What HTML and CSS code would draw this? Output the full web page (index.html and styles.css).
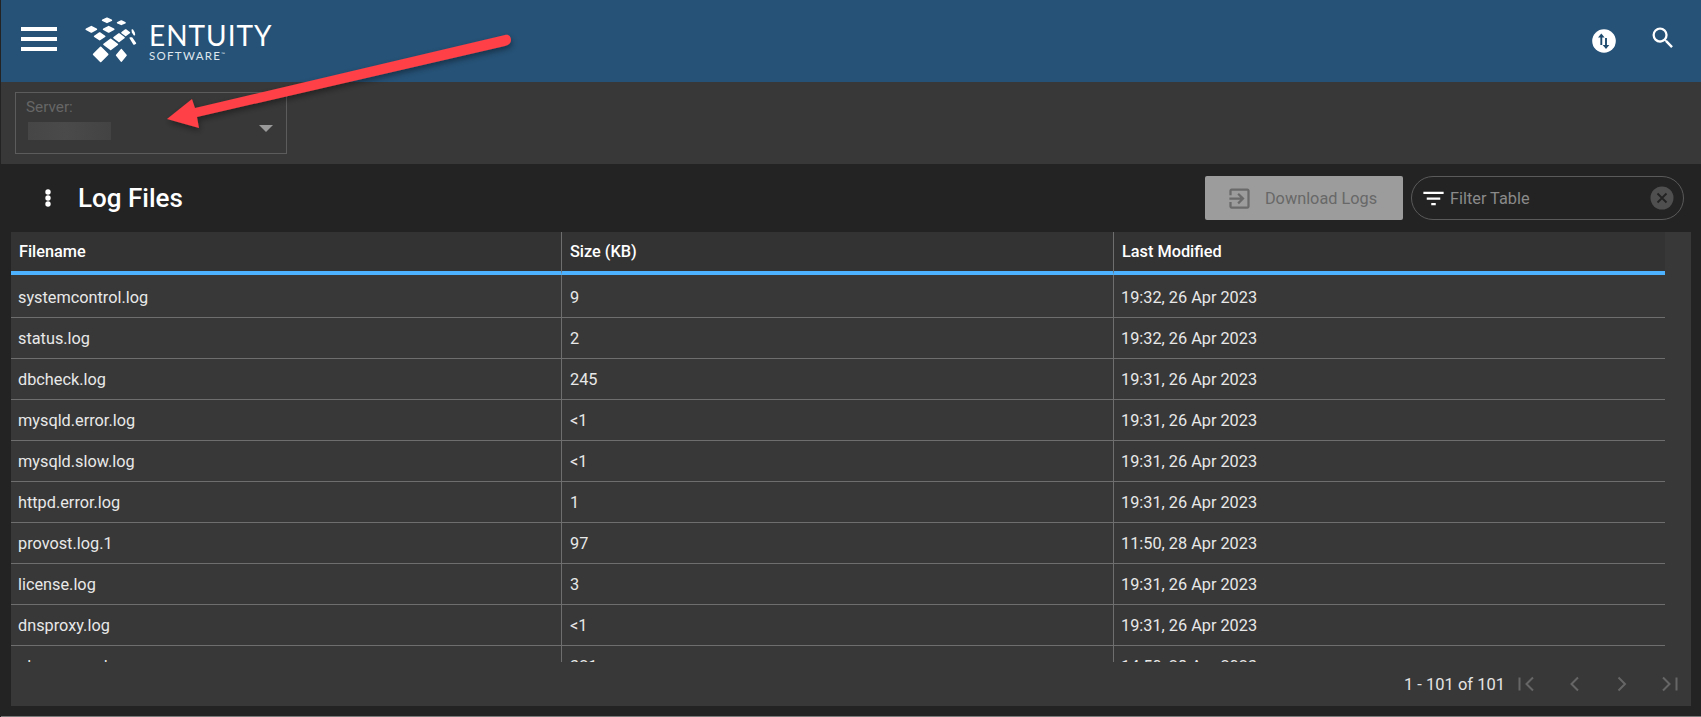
FILE: index.html
```html
<!DOCTYPE html>
<html lang="en">
<head>
<meta charset="utf-8">
<title>Log Files</title>
<link rel="stylesheet" href="styles.css">
</head>
<body>
<div class="app">
  <header class="topbar">
    <div class="brand">
      <button class="menu" aria-label="Menu"><span></span><span></span><span></span></button>
      <svg class="logo-mark" width="60" height="56" viewBox="0 0 180 168">
        <g fill="#fff" stroke="#fff" stroke-width="5" stroke-linejoin="round">
          <path d="M68 106l21 21-21 21-21-21z"/>
          <path d="M130 113l14 17-14 17-14-17z"/>
          <path d="M98 82l20 15-20 15-20-15z"/>
          <path d="M65 63l15 10-15 10-15-10z"/>
          <path d="M40 44l15 8-15 8-15-8z"/>
          <path d="M123 66l15 11-15 11-15-11z"/>
          <path d="M92 44l15 8-15 8-15-8z"/>
          <path d="M87 19l13 6-13 6-13-6z"/>
          <path d="M130 27l11 5-11 5-11-5z"/>
          <path d="M143 54l11 8-11 8-11-8z"/>
          <path d="M163 54l5 8 1 6-5-7z"/>
          <path d="M157 78l4 0 11 16-4 2z"/>
        </g>
      </svg>
      <div class="wordmark">
        <div class="wm-main">ENTUITY</div>
        <div class="wm-sub">SOFTWARE<sup>™</sup></div>
      </div>
    </div>
    <div class="top-actions">
      <svg class="ic-sync" width="24" height="24" viewBox="0 0 24 24">
        <circle cx="12" cy="12" r="11.8" fill="#fff"/>
        <path d="M9.3 6v10" fill="none" stroke="#1f4b6e" stroke-width="1.9"/>
        <path d="M9.3 4.6l3.3 4h-6.6z" fill="#1f4b6e"/>
        <path d="M14 9v10" fill="none" stroke="#1f4b6e" stroke-width="1.9"/>
        <path d="M14 20l-3.3-4h6.6z" fill="#1f4b6e"/>
      </svg>
      <svg class="ic-search" width="28" height="28" viewBox="0 0 24 24">
        <path fill="#fff" d="M15.5 14h-.79l-.28-.27A6.47 6.47 0 0 0 16 9.5 6.5 6.5 0 1 0 9.5 16c1.61 0 3.09-.59 4.23-1.57l.27.28v.79l5 4.99L20.49 19l-4.99-5zm-6 0C7.01 14 5 11.99 5 9.5S7.01 5 9.5 5 14 7.01 14 9.5 11.99 14 9.5 14z"/>
      </svg>
    </div>
  </header>

  <section class="filterband">
    <div class="server">
      <div class="server-text">
        <div class="server-label">Server:</div>
        <div class="server-value"></div>
      </div>
      <div class="caret"></div>
    </div>
  </section>

  <section class="panel">
    <div class="toolbar">
      <div class="title-group">
        <svg class="ic-more" width="24" height="24" viewBox="0 0 24 24"><circle cx="12" cy="6" r="2.7" fill="#fff"/><circle cx="12" cy="12" r="2.7" fill="#fff"/><circle cx="12" cy="18" r="2.7" fill="#fff"/></svg>
        <h1 class="title">Log Files</h1>
      </div>
      <div class="tools">
        <button class="download">
          <svg width="27" height="27" viewBox="0 0 24 24"><path fill="#6a6a6a" d="M10.09 15.59L11.5 17l5-5-5-5-1.41 1.41L12.67 11H3v2h9.67l-2.58 2.59zM19 3H5c-1.11 0-2 .9-2 2v4h2V5h14v14H5v-4H3v4c0 1.1.89 2 2 2h14c1.1 0 2-.9 2-2V5c0-1.1-.9-2-2-2z"/></svg>
          <span>Download Logs</span>
        </button>
        <div class="filter">
          <svg class="ic-filter" width="27" height="27" viewBox="0 0 24 24"><path fill="#fff" d="M10 18h4v-2h-4v2zM3 6v2h18V6H3zm3 7h12v-2H6v2z"/></svg>
          <span class="filter-text">Filter Table</span>
          <span class="filter-clear">
            <svg width="24" height="24" viewBox="0 0 24 24"><circle cx="12" cy="12" r="11.5" fill="#4f4f4f"/><path d="M7.5 7.5l9 9M16.5 7.5l-9 9" stroke="#222" stroke-width="1.8"/></svg>
          </span>
        </div>
      </div>
    </div>

    <div class="table-card">
      <div class="table-wrap">
        <table class="grid">
          <colgroup><col class="c1"><col class="c2"><col class="c3"></colgroup>
          <thead>
            <tr><th>Filename</th><th>Size (KB)</th><th>Last Modified</th></tr>
          </thead>
          <tbody>
            <tr><td>systemcontrol.log</td><td>9</td><td>19:32, 26 Apr 2023</td></tr>
            <tr><td>status.log</td><td>2</td><td>19:32, 26 Apr 2023</td></tr>
            <tr><td>dbcheck.log</td><td>245</td><td>19:31, 26 Apr 2023</td></tr>
            <tr><td>mysqld.error.log</td><td>&lt;1</td><td>19:31, 26 Apr 2023</td></tr>
            <tr><td>mysqld.slow.log</td><td>&lt;1</td><td>19:31, 26 Apr 2023</td></tr>
            <tr><td>httpd.error.log</td><td>1</td><td>19:31, 26 Apr 2023</td></tr>
            <tr><td>provost.log.1</td><td>97</td><td>11:50, 28 Apr 2023</td></tr>
            <tr><td>license.log</td><td>3</td><td>19:31, 26 Apr 2023</td></tr>
            <tr><td>dnsproxy.log</td><td>&lt;1</td><td>19:31, 26 Apr 2023</td></tr>
            <tr><td>plugmanag.log</td><td>321</td><td>14:50, 28 Apr 2023</td></tr>
          </tbody>
        </table>
      </div>
      <div class="pager">
        <span class="count">1 - 101 of 101</span>
        <svg width="24" height="24" viewBox="0 0 24 24"><path fill="none" stroke="#666" stroke-width="2" d="M5.5 5.5v13M19 5.5l-6.5 6.5 6.5 6.5"/></svg>
        <svg width="24" height="24" viewBox="0 0 24 24"><path fill="none" stroke="#666" stroke-width="2" d="M16 5.5l-6.5 6.5 6.5 6.5"/></svg>
        <svg width="24" height="24" viewBox="0 0 24 24"><path fill="none" stroke="#666" stroke-width="2" d="M8.500 5.5l6.500 6.500-6.500 6.500"/></svg>
        <svg width="24" height="24" viewBox="0 0 24 24"><path fill="none" stroke="#666" stroke-width="2" d="M5 5.500l6.500 6.500-6.500 6.500M18.500 5.500v13"/></svg>
      </div>
    </div>
  </section>
  <div class="page-foot"></div>
</div>

<svg class="arrow" width="360" height="120" viewBox="0 0 360 120">
  <defs>
    <filter id="sh" x="-10%" y="-20%" width="120%" height="150%"><feDropShadow dx="1" dy="3" stdDeviation="3" flood-color="#000" flood-opacity=".4"/></filter>
  </defs>
  <path filter="url(#sh)" fill="#ff4146" d="M7 94L32 74L35 83L345 10C349 9 351 12 351 15C351 18 349 20 345 21L37 92L39 103Z"/>
</svg>
</body>
</html>
```
FILE: styles.css
```css
* { box-sizing: border-box; }
html, body { margin: 0; height: 100%; background: #232323; overflow: hidden; }
body { font-family: Roboto, "Liberation Sans", sans-serif; color: #e6e6e6; position: relative; }
.app { height: 717px; display: flex; flex-direction: column; padding-left: 1px; }

.topbar { height: 82px; background: #265277; display: flex; justify-content: space-between; align-items: center; padding: 0 24px 0 20px; flex: none; }
.brand { display: flex; align-items: center; }
.menu { width: 36px; height: 24px; padding: 0; background: none; border: 0; display: flex; flex-direction: column; justify-content: space-between; margin: -4px 0 0 0; }
.menu span { display: block; height: 4px; background: #fff; }
.logo-mark { margin: -2px 0 0 21px; }
.wordmark { margin: 0 0 0 11px; color: #fff; font-family: Lato, sans-serif; }
.wm-main { font-size: 28px; line-height: 30px; letter-spacing: 1px; font-weight: 400; }
.wm-sub { font-size: 11.5px; line-height: 12px; letter-spacing: 1.3px; color: #dfe7ee; }
.wm-sub sup { font-size: 5px; vertical-align: 4px; line-height: 0; }
.top-actions { display: flex; align-items: center; gap: 33px; }
.ic-search { margin-top: -6px; }

.filterband { height: 82px; background: #383838; padding: 10px 14px; flex: none; }
.server { width: 272px; height: 62px; border: 1px solid #5c5c5c; display: flex; justify-content: space-between; padding: 5px 13px 0 10px; }
.server-label { font-size: 15.300px; line-height: 18px; color: #666; }
.server-value { width: 83px; height: 18px; margin: 6px 0 0 2px; background: linear-gradient(90deg, #464646, #4a4a4a 45%, #434343); }
.caret { width: 0; height: 0; margin-top: 27px; border-left: 7px solid transparent; border-right: 7px solid transparent; border-top: 7px solid #9a9a9a; }

.panel { flex: none; height: 552px; background: #232323; padding: 0 10px; display: flex; flex-direction: column; }
.toolbar { height: 68px; display: flex; justify-content: space-between; align-items: center; padding: 0 0 0 25px; flex: none; }
.title-group { display: flex; align-items: center; gap: 18px; }
.title { margin: 0; font-size: 26px; font-weight: 500; color: #fff; line-height: 30px; }
.tools { display: flex; align-items: center; gap: 8px; padding-right: 7px; }
.download { width: 198px; height: 44px; background: #9c9c9c; border: 0; border-radius: 2px; display: flex; align-items: center; justify-content: center; gap: 12px; font: 400 16.300px Roboto, sans-serif; color: #686868; padding: 0 5px 0 0; }
.filter { width: 273px; height: 44px; border: 1px solid #5a5a5a; border-radius: 22px; display: flex; align-items: center; padding: 0 9px 0 8px; font-size: 16.300px; color: #8a8a8a; }
.ic-filter { flex: none; }
.filter-text { flex: 1; margin-left: 3px; }
.filter-clear { display: flex; }

.table-card { flex: none; height: 474px; background: #383838; display: flex; flex-direction: column; }
.table-wrap { height: 430px; overflow: hidden; flex: none; }
.grid { width: 1654px; border-collapse: separate; border-spacing: 0; table-layout: fixed; font-size: 16.300px; background: #383838; }
.c1 { width: 551px; } .c2 { width: 552px; } .c3 { width: 551px; }
.grid th { height: 43px; background: #333; color: #fff; font-weight: 500; text-align: left; padding: 0 8px; border-bottom: 4px solid #4db2ff; border-right: 1px solid #6e6e6e; font-size: 16.300px; }
.grid th:last-child, .grid td:last-child { border-right: 0; }
.grid td { height: 41px; padding: 0 8px 0 7px; border-bottom: 1px solid #6e6e6e; border-right: 1px solid #6e6e6e; color: #e8e8e8; }
.grid td:nth-child(2) { padding-left: 8px; }
.grid tbody tr:first-child td { height: 43px; padding-top: 2px; }

.pager { flex: 1; display: flex; justify-content: flex-end; align-items: center; gap: 24px; padding-right: 9px; font-size: 16.500px; color: #e4e4e4; }
.count { margin-right: -15px; }

.page-foot { flex: 1; border-bottom: 1px solid #7a7a7a; background: #232323; }
.arrow { position: absolute; left: 160px; top: 25px; pointer-events: none; overflow: visible; }
```
